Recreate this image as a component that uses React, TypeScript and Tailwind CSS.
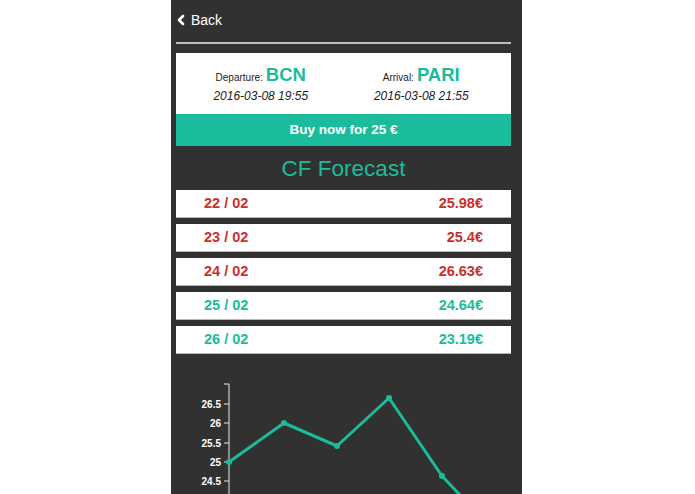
import { ChevronLeft } from 'lucide-react';

const rows = [
  { day: '22 / 02', price: '25.98€', up: true },
  { day: '23 / 02', price: '25.4€', up: true },
  { day: '24 / 02', price: '26.63€', up: true },
  { day: '25 / 02', price: '24.64€', up: false },
  { day: '26 / 02', price: '23.19€', up: false },
];

// chart points, panel-relative px
const points = [
  [58, 108],
  [113, 69],
  [166, 92],
  [218, 44],
  [271, 122],
  [324, 178],
];

const ticks = [
  { label: '26.5', y: 50 },
  { label: '26', y: 69 },
  { label: '25.5', y: 89 },
  { label: '25', y: 108 },
  { label: '24.5', y: 127 },
];

export default function App() {
  return (
    <div className="min-h-screen bg-white font-['Liberation_Sans',Arial,sans-serif]">
      <div className="ml-[171px] w-[351px] h-[494px] overflow-hidden bg-[#313131]">
        <div className="pl-[5px] pr-[11px]">
          {/* Header */}
          <div className="flex items-center gap-[2px] pt-[11px] h-[29px] text-white text-[14px] leading-[18px]">
            <ChevronLeft size={16} strokeWidth={4} className="-ml-[3px]" />
            <span>Back</span>
          </div>
          <div className="mt-[13px] h-[2px] bg-[#bdbdbd]" />

          {/* Flight card */}
          <div className="mt-[9px] bg-white">
            <div className="grid grid-cols-2 pt-[11px] pb-[10px] text-[#222]">
              <div className="flex flex-col items-center pl-[2px]">
                <div className="flex items-baseline gap-[3px]">
                  <span className="text-[10px]">Departure:</span>
                  <span className="text-[18.5px] font-bold text-[#1bbc9b] leading-[22px]">BCN</span>
                </div>
                <span className="text-[12px] italic leading-[16px] mt-[2px]">2016-03-08 19:55</span>
              </div>
              <div className="flex flex-col items-center pr-[12px]">
                <div className="flex items-baseline gap-[3px]">
                  <span className="text-[10px]">Arrival:</span>
                  <span className="text-[18.5px] font-bold text-[#1bbc9b] leading-[22px]">PARI</span>
                </div>
                <span className="text-[12px] italic leading-[16px] mt-[2px]">2016-03-08 21:55</span>
              </div>
            </div>
            <div className="h-[32px] flex items-center justify-center bg-[#1bbc9b] text-white text-[13.5px] font-bold">
              Buy now for 25 €
            </div>
          </div>

          {/* Forecast */}
          <h2 className="h-[44px] flex items-center justify-center text-[22.5px] text-[#1bbc9b] pt-[1px]">
            CF Forecast
          </h2>
          <div className="flex flex-col gap-[6px]">
            {rows.map((r) => (
              <div
                key={r.day}
                className={`h-[28px] flex items-center justify-between px-[28px] bg-white border-b border-[#b8b8b8] text-[14.5px] font-bold ${
                  r.up ? 'text-[#c9302c]' : 'text-[#1bbc9b]'
                }`}
              >
                <span>{r.day}</span>
                <span>{r.price}</span>
              </div>
            ))}
          </div>
        </div>

        {/* Chart */}
        <svg width="351" height="140" className="block">
          <line x1="58" y1="30" x2="58" y2="140" stroke="#e8e8e8" strokeWidth="1" />
          <line x1="53" y1="30" x2="58" y2="30" stroke="#e8e8e8" strokeWidth="1" />
          {ticks.map((t) => (
            <g key={t.label}>
              <line x1="53" y1={t.y} x2="58" y2={t.y} stroke="#e8e8e8" strokeWidth="1" />
              <text
                x="50"
                y={t.y + 3.5}
                textAnchor="end"
                fill="#ffffff"
                fontSize="10"
                fontWeight="bold"
                fontFamily="Liberation Sans, Arial, sans-serif"
              >
                {t.label}
              </text>
            </g>
          ))}
          <polyline
            points={points.map((p) => p.join(',')).join(' ')}
            fill="none"
            stroke="#1bbc9b"
            strokeWidth="3"
            strokeLinejoin="round"
          />
          {points.map((p, i) => (
            <circle key={i} cx={p[0]} cy={p[1]} r="3" fill="#1bbc9b" />
          ))}
        </svg>
      </div>
    </div>
  );
}
